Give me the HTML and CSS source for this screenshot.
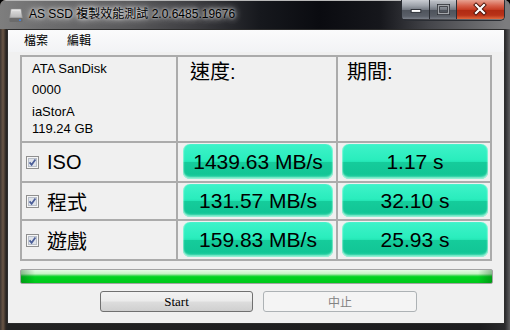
FILE: index.html
```html
<!DOCTYPE html>
<html lang="zh-Hant">
<head>
    <meta charset="UTF-8">
    <meta name="viewport" content="width=device-width, initial-scale=1.0">
    <title>AS SSD 複製效能測試</title>
    <link rel="stylesheet" href="styles.css">
</head>
<body>
<div class="window">
    <div class="titlebar">
        <svg class="app-icon" width="14" height="15" viewBox="0 0 14 15">
            <defs>
                <linearGradient id="driveTop" x1="0" y1="0" x2="0" y2="1">
                    <stop offset="0" stop-color="#f2f2f2"/>
                    <stop offset="1" stop-color="#a9a9a9"/>
                </linearGradient>
            </defs>
            <path d="M2 1 H12 L13.5 10 H0.5 Z" fill="url(#driveTop)" stroke="#8a8a8a" stroke-width="0.6"/>
            <path d="M3 4 H11 M2.7 6 H11.3 M2.4 8 H11.6" stroke="#c9c9c9" stroke-width="0.8"/>
            <rect x="0.5" y="10" width="13" height="4" rx="1" fill="#6b6b6b"/>
            <rect x="10" y="11.5" width="2" height="1.2" fill="#3d8cff"/>
        </svg>
        <span class="title">AS SSD 複製效能測試 2.0.6485.19676</span>
        <div class="caption">
            <div class="cap-btn cap-min">
                <svg width="28" height="19" viewBox="0 0 28 19"><rect x="9.5" y="9.5" width="10" height="3" fill="#fff" stroke="#2c2f36"/></svg>
            </div>
            <div class="cap-btn cap-max">
                <svg width="26" height="19" viewBox="0 0 26 19"><rect x="8.5" y="5.5" width="10" height="8" fill="none" stroke="#2c2f36" stroke-width="3"/><rect x="8.5" y="5.5" width="10" height="8" fill="none" stroke="#a8abb0" stroke-width="1.4"/></svg>
            </div>
            <div class="cap-btn cap-close">
                <svg width="46" height="19" viewBox="0 0 46 19"><path d="M19 5 L27 13 M27 5 L19 13" stroke="#4a1208" stroke-width="4" stroke-linecap="square"/><path d="M19 5 L27 13 M27 5 L19 13" stroke="#fff" stroke-width="2.2" stroke-linecap="square"/></svg>
            </div>
        </div>
    </div>

    <div class="client">
        <div class="menubar">
            <span class="menu-item">檔案</span>
            <span class="menu-item">編輯</span>
        </div>

        <div class="results">
            <div class="cell drive">
                <div class="drive-line">ATA SanDisk</div>
                <div class="drive-line second">0000</div>
                <div class="drive-line third">iaStorA</div>
                <div class="drive-line fourth">119.24 GB</div>
            </div>
            <div class="cell head">速度:</div>
            <div class="cell head time">期間:</div>

            <div class="cell label">
                <svg class="check" width="13" height="13" viewBox="0 0 13 13"><rect x="0.5" y="0.5" width="12" height="12" fill="#f6f6f6" stroke="#8f8f8f"/><rect x="2.5" y="2.5" width="8" height="8" fill="#dfe3ea" stroke="#b9bfc9"/><path d="M3.6 6.4 L5.6 8.8 L9.4 3.4" stroke="#4a5d98" stroke-width="1.7" fill="none"/></svg>
                <span>ISO</span>
            </div>
            <div class="cell value"><div class="bar">1439.63 MB/s</div></div>
            <div class="cell value time"><div class="bar">1.17 s</div></div>

            <div class="cell label">
                <svg class="check" width="13" height="13" viewBox="0 0 13 13"><rect x="0.5" y="0.5" width="12" height="12" fill="#f6f6f6" stroke="#8f8f8f"/><rect x="2.5" y="2.5" width="8" height="8" fill="#dfe3ea" stroke="#b9bfc9"/><path d="M3.6 6.4 L5.6 8.8 L9.4 3.4" stroke="#4a5d98" stroke-width="1.7" fill="none"/></svg>
                <span>程式</span>
            </div>
            <div class="cell value"><div class="bar">131.57 MB/s</div></div>
            <div class="cell value time"><div class="bar">32.10 s</div></div>

            <div class="cell label">
                <svg class="check" width="13" height="13" viewBox="0 0 13 13"><rect x="0.5" y="0.5" width="12" height="12" fill="#f6f6f6" stroke="#8f8f8f"/><rect x="2.5" y="2.5" width="8" height="8" fill="#dfe3ea" stroke="#b9bfc9"/><path d="M3.6 6.4 L5.6 8.8 L9.4 3.4" stroke="#4a5d98" stroke-width="1.7" fill="none"/></svg>
                <span>遊戲</span>
            </div>
            <div class="cell value"><div class="bar">159.83 MB/s</div></div>
            <div class="cell value time"><div class="bar">25.93 s</div></div>
        </div>

        <div class="progress"></div>

        <div class="buttons">
            <button class="btn start">Start</button>
            <button class="btn stop" disabled>中止</button>
        </div>
    </div>
</div>
</body>
</html>
```

FILE: styles.css
```css
body {
    margin: 0;
    font-family: "Liberation Sans", "Noto Sans CJK TC", sans-serif;
    background: #000;
}

.window {
    width: 510px;
    height: 330px;
    box-sizing: border-box;
    display: flex;
    flex-direction: column;
    border-radius: 6px 6px 0 0;
    overflow: hidden;
    background: linear-gradient(to right, #3a3431 0, #6a5646 3px, #2a2522 6px, #222 8px, #1c1c1e 480px, #2a2a2c 505px, #5e5e60 510px);
}

/* title bar */
.titlebar {
    height: 29px;
    flex: none;
    display: flex;
    align-items: flex-start;
    background: linear-gradient(to right, #7e7e7e 0, #6f6f70 40px, #59595b 130px, #3a3a3e 200px, #16181d 260px, #0a0b10 320px, #16171c 380px, #45464b 430px, #7c7c7e 505px);
    border-top: 1px solid #b8b8b8;
    box-sizing: border-box;
}

.app-icon {
    margin: 7px 0 0 9px;
    flex: none;
}

.title {
    margin: 6px 0 0 6px;
    font-size: 12px;
    line-height: 15px;
    color: #000;
    white-space: nowrap;
    text-shadow: 0 0 6px rgba(255, 255, 255, 0.9), 0 0 10px rgba(255, 255, 255, 0.6), 0 0 3px rgba(255, 255, 255, 0.8);
}

.caption {
    margin: -1px 5px 0 auto;
    display: flex;
    height: 20px;
    border: 1px solid #2a2d33;
    border-top: none;
    border-radius: 0 0 5px 5px;
    overflow: hidden;
}

.cap-btn {
    height: 19px;
    display: flex;
}

.cap-min,
.cap-max {
    background: linear-gradient(#c9ccd2 0, #9ea3ab 30%, #767b84 50%, #4f545c 52%, #5a5f68 85%, #7b8089 100%);
    border-right: 1px solid #2a2d33;
}

.cap-min {
    width: 27px;
}

.cap-max {
    width: 26px;
    opacity: 0.95;
}

.cap-close {
    width: 47px;
    background: linear-gradient(#e7a292 0, #d6604a 30%, #c63d25 50%, #b02a12 52%, #b83218 80%, #e0683c 100%);
}

/* client area */
.client {
    flex: 1;
    margin: 0 5px 6px 7px;
    border: 1px solid #2d2d2d;
    background: #f0f0f0;
    display: flex;
    flex-direction: column;
    align-items: flex-start;
}

.menubar {
    height: 22px;
    width: 100%;
    box-sizing: border-box;
    padding-left: 6px;
    display: flex;
    align-items: center;
    background: linear-gradient(#fbfbfc, #f2f3f5);
}

.menu-item {
    padding: 0 9px 0 10px;
    font-size: 12px;
    line-height: 16px;
    color: #000;
}

.results {
    margin: 3px 0 0 12px;
    display: grid;
    grid-template-columns: 154px 158px 152px;
    grid-template-rows: 84px 38px 36px 38px;
    gap: 2px;
    padding: 2px;
    background: #ababab;
}

.cell {
    background: #f0f0f0;
    box-sizing: border-box;
}

.drive {
    padding: 4px 0 0 10px;
    font-size: 13px;
    line-height: 16px;
}

.drive-line.second {
    margin-top: 5px;
}

.drive-line.third {
    margin-top: 6px;
}

.drive-line.fourth {
    margin-top: 1px;
}

.head {
    padding: 3px 0 0 12px;
    font-size: 20px;
    line-height: 24px;
}

.head.time {
    padding-left: 9px;
}

.label {
    display: flex;
    align-items: center;
    padding-left: 4px;
    font-size: 20px;
}

.check {
    flex: none;
    margin-right: 8px;
}

.value {
    display: flex;
    padding: 1px 3px 2px 5px;
}

.value.time {
    padding: 1px 2px 2px 4px;
}

.bar {
    flex: 1;
    display: flex;
    align-items: center;
    justify-content: center;
    border-radius: 7px;
    font-size: 21px;
    color: #000;
    background: linear-gradient(#3ef3c9 0, #2aedbd 45%, #24e6b5 50%, #15cc9b 52%, #12c696 85%, #1ccfa0 100%);
    box-shadow: inset 0 -2px 2px rgba(200, 255, 235, 0.7), inset 1px 0 1px rgba(200, 255, 235, 0.4), inset -1px 0 1px rgba(200, 255, 235, 0.4);
}

.progress {
    margin: 8px 0 0 12px;
    width: 473px;
    height: 15px;
    box-sizing: border-box;
    border: 1px solid #a3a3a3;
    border-radius: 2px;
    background:
        linear-gradient(to right, rgba(0, 70, 10, 0.35) 0, rgba(0, 70, 10, 0) 14px, rgba(0, 70, 10, 0) calc(100% - 14px), rgba(0, 70, 10, 0.35) 100%),
        linear-gradient(#e6fbe6 0, #c4f3c4 30%, #5fdc6f 40%, #00d420 52%, #00c81a 100%);
}

.buttons {
    margin: 7px 0 0 92px;
    display: flex;
    gap: 10px;
}

.btn {
    width: 153px;
    height: 21px;
    padding: 0;
    border: 1px solid #707070;
    border-radius: 3px;
    background: linear-gradient(#f2f2f2 0, #ebebeb 48%, #dddddd 52%, #cfcfcf 100%);
    font-family: "Liberation Serif", serif;
    font-size: 13px;
    color: #000;
}

.btn.stop {
    width: 154px;
    border-color: #adb2b5;
    background: #f4f4f4;
    color: #838383;
    font-family: "Noto Sans CJK TC", sans-serif;
    font-size: 12px;
}
```
